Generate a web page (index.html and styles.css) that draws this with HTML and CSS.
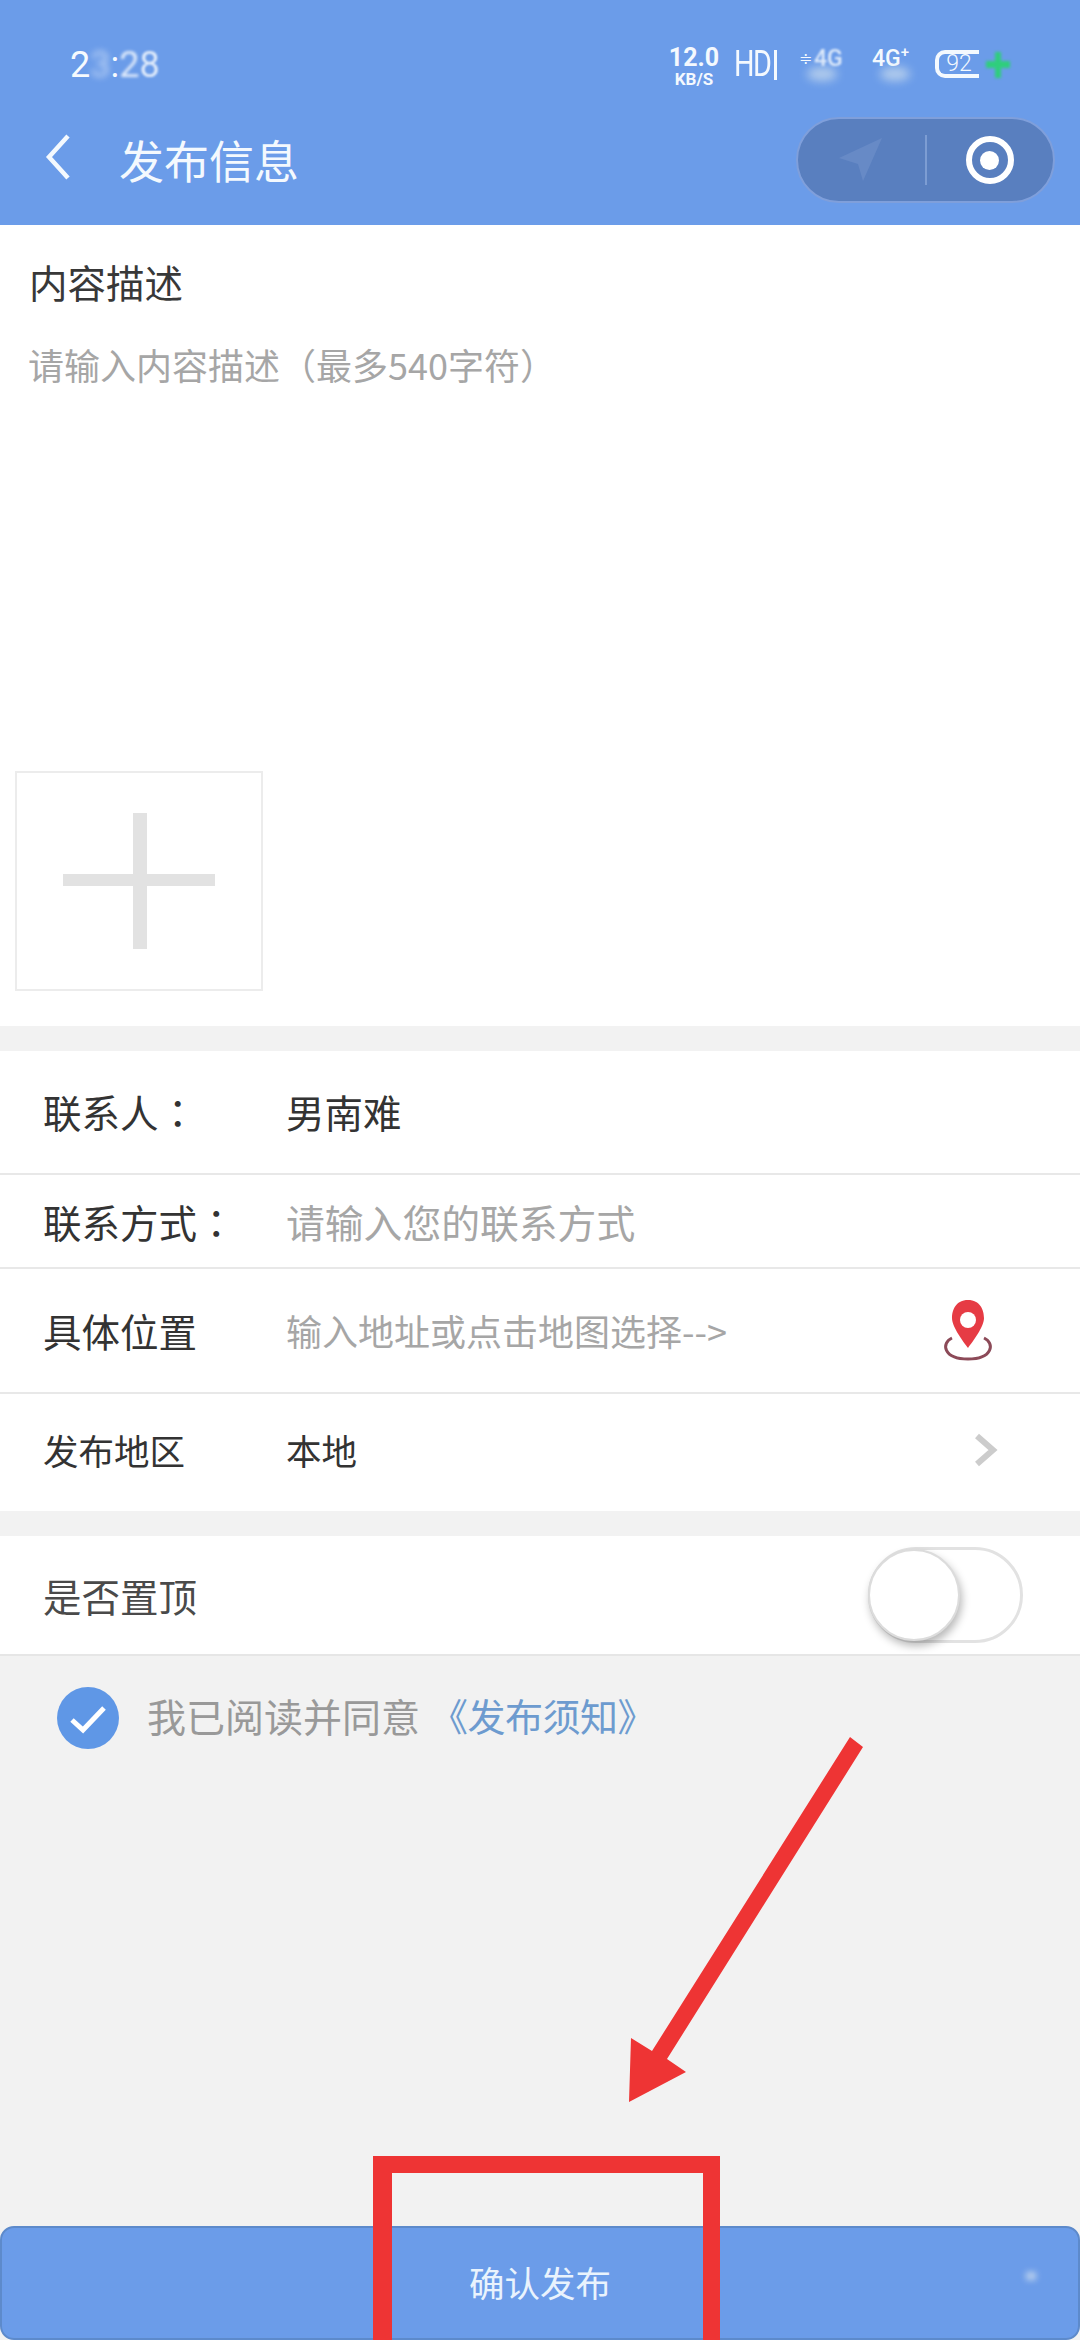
FILE: index.html
```html
<!DOCTYPE html>
<html lang="zh">
<head>
<meta charset="utf-8">
<title>发布信息</title>
<link rel="stylesheet" href="styles.css">
</head>
<body>
<div class="page">
  <header class="header">
    <div class="status">
      <div class="time"><span>2</span><span class="blur-strong">3</span><span>:</span><span class="blur-mid">2</span><span class="blur-soft">8</span></div>
      <div class="status-icons">
        <div class="speed"><span class="speed-num">12.0</span><span class="speed-unit">KB/S</span></div>
        <div class="hd"><span class="hd-text">HD</span><span class="hd-bar"></span></div>
        <div class="net net-first"><span class="updown">≑</span><span class="net-text blur-soft">4G</span><span class="smudge"></span></div>
        <div class="net net-second"><span class="net-text">4G<sup class="plus-sign">+</sup></span><span class="smudge"></span></div>
        <div class="battery"><span class="battery-num">92</span></div>
        <svg class="charge" viewBox="0 0 24 28" width="24" height="28"><path d="M9 1h6v9h9v7h-9v10H9V17H0v-7h9z"/></svg>
      </div>
    </div>
    <div class="navbar">
      <div class="nav-left">
        <svg class="back" viewBox="0 0 26 46" width="26" height="46"><path d="M23 2 L4 23 L23 44"/></svg>
        <h1 class="title">发布信息</h1>
      </div>
      <div class="capsule">
        <div class="capsule-cell">
          <svg viewBox="0 0 44 44" width="44" height="44"><path class="nav-arrow" d="M43 0 L0 20 L19 26 L24 43 Z"/></svg>
        </div>
        <div class="capsule-line"></div>
        <div class="capsule-cell">
          <div class="target"><div class="target-dot"></div></div>
        </div>
      </div>
    </div>
  </header>

  <section class="desc">
    <div class="desc-title">内容描述</div>
    <div class="desc-hint">请输入内容描述（最多540字符）</div>
    <div class="upload">
      <svg viewBox="0 0 152 136" width="152" height="136"><path class="plus" d="M70 0h14v61h68v12H84v63H70V73H0V61h70z"/></svg>
    </div>
  </section>

  <section class="form">
    <div class="row row-a"><span class="label">联系人<span class="colon" lang="zh-Hant">：</span></span><span class="value">男南难</span></div>
    <div class="row row-b"><span class="label">联系方式<span class="colon" lang="zh-Hant">：</span></span><span class="hint hint-wide">请输入您的联系方式</span></div>
    <div class="row row-c"><span class="label">具体位置</span><span class="hint hint-narrow">输入地址或点击地图选择--&gt;</span>
      <svg class="pin" viewBox="0 0 50 62" width="50" height="62">
        <path class="pin-ring" d="M9 39 C-2 44 0 60 25 60 C50 60 52 44 41 39"/>
        <path class="pin-body" d="M25 1 C13 1 9 11 9 19 C9 28 20 42 25 49 C30 42 41 28 41 19 C41 11 37 1 25 1 Z"/>
        <circle class="pin-hole" cx="25" cy="21" r="8"/>
      </svg>
    </div>
    <div class="row row-d"><span class="label label-small">发布地区</span><span class="value value-small">本地</span>
      <svg class="chev" viewBox="0 0 24 34" width="24" height="34"><path d="M3 3 L19 17 L3 31"/></svg>
    </div>
  </section>

  <section class="top-row">
    <span class="top-label">是否置顶</span>
    <div class="toggle"><div class="knob"></div></div>
  </section>

  <div class="agree">
    <svg class="check" viewBox="0 0 62 62" width="62" height="62"><circle cx="31" cy="31" r="31"/><path d="M15 33 L26 43 L47 21"/></svg>
    <span class="agree-text">我已阅读并同意</span>
    <span class="agree-link">《发布须知》</span>
  </div>

  <button class="submit">确认发布<span class="submit-speck"></span></button>

  <svg class="annot" viewBox="0 0 1080 2340" width="1080" height="2340">
    <path d="M373 2340 V2156 H720 V2340 H703 V2173 H392 V2340 Z"/>
    <path d="M850 1737 L863 1747 L667 2059 L686 2072 L629 2102 L631 2038 L652 2051 Z"/>
  </svg>
</div>
</body>
</html>
```
FILE: styles.css
```css
* { box-sizing: border-box; }
html, body { margin: 0; padding: 0; }
body { background: #f2f2f2; font-family: "Noto Sans CJK SC", "Noto Sans", sans-serif; }

.page {
  position: relative;
  width: 1080px;
  height: 2340px;
  overflow: hidden;
  display: flex;
  flex-direction: column;
  background: #f2f2f2;
}

/* header */
.header { height: 225px; background: #6b9ce9; color: #f4f9fe; flex: none; }
.status {
  height: 115px;
  padding: 44px 70px 0 70px;
  display: flex;
  justify-content: space-between;
  align-items: flex-start;
}
.time { font: 400 36px/42px Roboto, sans-serif; color: #f6fafe; }
.blur-strong { filter: blur(3px); opacity: .6; }
.blur-mid { filter: blur(1.5px); opacity: .85; }
.blur-soft { filter: blur(1px); opacity: .85; }
.status-icons { display: flex; align-items: flex-start; margin-top: 3px; }
.speed { width: 48px; display: flex; flex-direction: column; align-items: center; font-family: Roboto, sans-serif; font-weight: 700; }
.speed-num { font-size: 25px; line-height: 22px; }
.speed-unit { font-size: 17px; line-height: 16px; margin-top: 2px; }
.hd { margin-left: 16px; width: 43px; height: 30px; display: flex; justify-content: space-between; margin-top: 3px; }
.hd-text { width: 36px; flex: none; font: 400 36px/28px Roboto, sans-serif; transform: scaleX(.8); transform-origin: left center; letter-spacing: -2px; }
.hd-bar { width: 3px; height: 30px; flex: none; background: #f4f9fe; }
.net { position: relative; height: 36px; font: 500 23px/24px Roboto, sans-serif; display: flex; }
.net-first { margin-left: 22px; width: 73px; gap: 5px; }
.net-second { width: 63px; }
.updown { width: 10px; font-size: 16px; }
.plus-sign { font-size: 15px; line-height: 0; }
.smudge {
  position: absolute;
  left: 8px;
  top: 20px;
  width: 30px;
  height: 14px;
  border-radius: 50%;
  background: #cfe0ee;
  opacity: .7;
  filter: blur(5px);
}
.battery {
  width: 44px;
  height: 28px;
  margin-top: 3px;
  border: 4px solid #f4f9fe;
  border-right: none;
  border-radius: 10px 0 0 10px;
  display: flex;
  align-items: center;
  justify-content: center;
}
.battery-num { font: 300 23px/20px Roboto, sans-serif; }
.charge { margin: 4px 0 0 7px; fill: #2fce7c; filter: blur(1.5px); }

.navbar { height: 110px; padding: 2px 25px 0 45px; display: flex; justify-content: space-between; align-items: flex-start; }
.nav-left { display: flex; align-items: center; height: 86px; }
.back { fill: none; stroke: #f4f9fe; stroke-width: 4.5; margin-top: -6px; }
.title { margin: -1px 0 0 48px; font-size: 45px; line-height: 60px; font-weight: 400; }
.capsule {
  width: 259px;
  height: 86px;
  display: flex;
  align-items: center;
  background: #597fbf;
  border: 2px solid #7f9fdb;
  border-radius: 43px;
}
.capsule-cell { flex: 1; display: flex; justify-content: center; align-items: center; }
.capsule-line { width: 2px; height: 50px; background: #7d9dd3; }
.nav-arrow { fill: #678ac6; }
.target {
  width: 48px;
  height: 48px;
  border: 6px solid #fff;
  border-radius: 50%;
  display: flex;
  align-items: center;
  justify-content: center;
}
.target-dot { width: 19px; height: 19px; border-radius: 50%; background: #fff; }

/* description */
.desc {
  height: 801px;
  flex: none;
  background: #fff;
  display: flex;
  flex-direction: column;
  padding: 0 0 35px 15px;
}
.desc-title { margin: 31px 0 0 14px; font-size: 38.5px; line-height: 50px; color: #383838; }
.desc-hint { margin: 33px 0 0 13px; font-size: 36px; line-height: 50px; color: #a6a6a6; white-space: nowrap; }
.upload {
  margin-top: auto;
  width: 248px;
  height: 220px;
  border: 2px solid #ececec;
  display: flex;
  align-items: center;
  justify-content: center;
}
.plus { fill: #e2e2e2; }

/* form */
.form { margin-top: 25px; background: #fff; flex: none; }
.row {
  display: flex;
  align-items: center;
  padding-left: 43px;
  border-bottom: 2px solid #e8e8e8;
  font-size: 38.5px;
  color: #333;
}
.row-a { height: 124px; padding-bottom: 2px; }
.row-b { height: 94px; }
.row-c { height: 125px; padding-bottom: 2px; }
.row-d { height: 117px; border-bottom: none; padding-bottom: 6px; }
.label { width: 243px; flex: none; white-space: nowrap; }
.colon { font-family: "Noto Sans CJK TC", sans-serif; }
.label-small, .value-small { font-size: 35.5px; }
.value { white-space: nowrap; }
.hint { color: #a6a6a6; white-space: nowrap; }
.hint-wide { font-size: 38.8px; }
.hint-narrow { font-size: 36px; }
.pin { margin: 0 87px 0 auto; }
.pin-ring { fill: none; stroke: #8c4a58; stroke-width: 3; }
.pin-body { fill: #e63b44; }
.pin-hole { fill: #fff; }
.chev { margin-left: auto; margin-right: 82px; fill: none; stroke: #cccccc; stroke-width: 6; }

.top-row {
  margin-top: 25px;
  height: 120px;
  flex: none;
  background: #fff;
  border-bottom: 2px solid #e6e6e6;
  display: flex;
  align-items: center;
  justify-content: space-between;
  padding: 0 57px 0 43px;
}
.top-label { font-size: 38.5px; color: #4a4a4a; }
.toggle {
  width: 155px;
  height: 96px;
  border: 3px solid #e2e2e2;
  border-radius: 48px;
  display: flex;
  align-items: center;
}
.knob {
  width: 92px;
  height: 92px;
  margin-left: -3px;
  border-radius: 50%;
  background: #fff;
  border: 2px solid #dcdcdc;
  box-shadow: 2px 5px 9px rgba(0, 0, 0, .28);
}

/* agreement */
.agree { margin-top: 31px; padding-left: 57px; display: flex; align-items: center; font-size: 39px; line-height: 62px; }
.agree-text, .agree-link { position: relative; top: -3px; }
.check { flex: none; margin-right: 28px; }
.check circle { fill: #5f97e6; }
.check path { fill: none; stroke: #fff; stroke-width: 5; }
.agree-text { color: #999; }
.agree-link { margin-left: 10px; color: #6d9bcf; font-size: 38px; letter-spacing: -.5px; }

/* submit */
.submit {
  margin-top: auto;
  position: relative;
  width: 1080px;
  height: 114px;
  flex: none;
  background: #6b9ce9;
  border: 2px solid #5d8acb;
  border-radius: 14px;
  color: #e9f3fd;
  font-family: inherit;
  font-size: 35.5px;
  padding: 0 0 4px 0;
}
.submit-speck {
  position: absolute;
  left: 1024px;
  top: 44px;
  width: 10px;
  height: 8px;
  background: #dfe9f1;
  opacity: .7;
  filter: blur(3px);
}

.annot { position: absolute; left: 0; top: 0; pointer-events: none; }
.annot path { fill: #ee3434; }
```
